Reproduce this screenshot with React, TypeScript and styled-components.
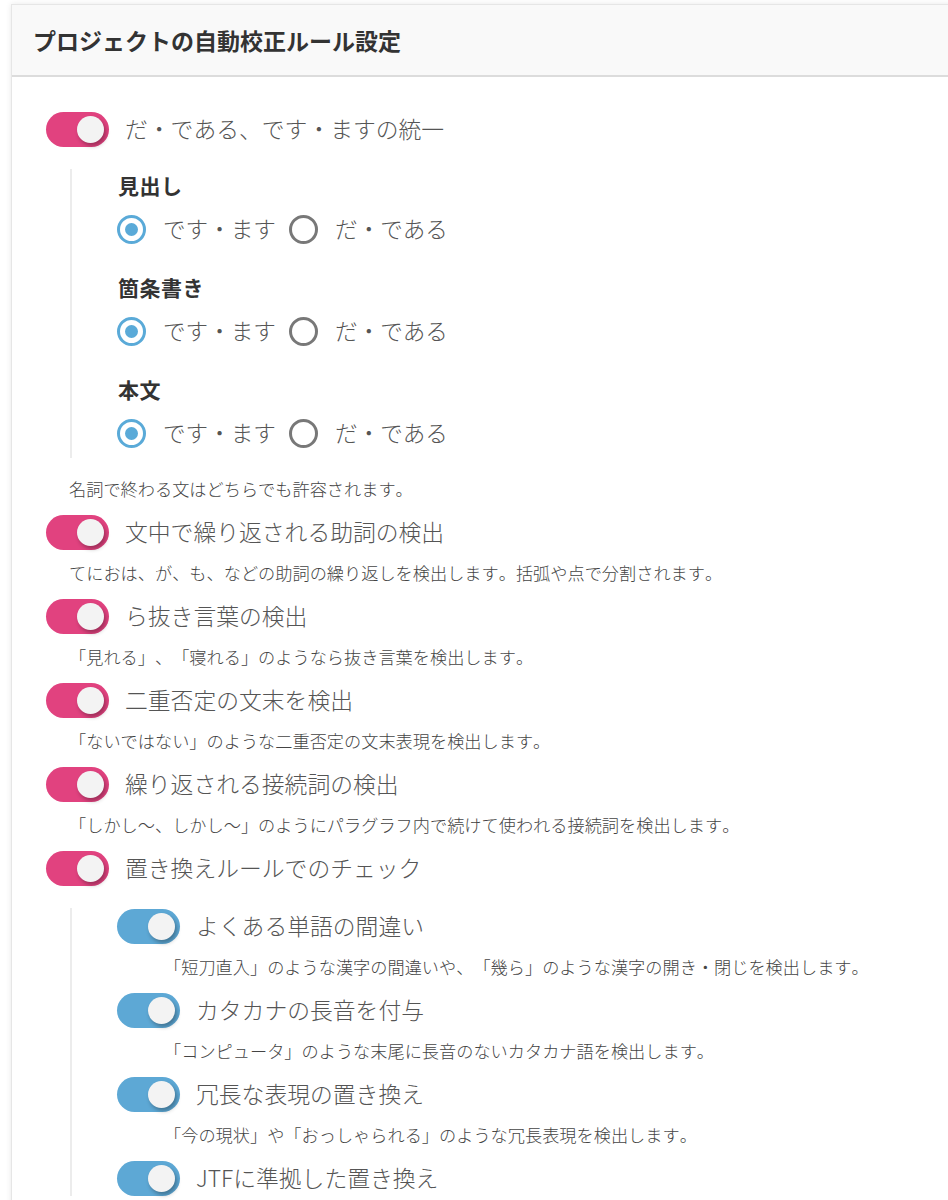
import React from 'react';
import styled, { createGlobalStyle } from 'styled-components';

const GlobalStyle = createGlobalStyle`
  body {
    margin: 0;
    background: #ffffff;
    overflow-x: hidden;
    font-family: "Noto Sans CJK JP", "Noto Sans", sans-serif;
    font-kerning: none;
    text-spacing-trim: space-all;
  }
`;

type Tone = 'pink' | 'blue';

const toneColor: Record<Tone, string> = {
  pink: '#e1427f',
  blue: '#5da8d5',
};

type RuleData = {
  label: string;
  desc?: string;
};

const mainRules: RuleData[] = [
  {
    label: '文中で繰り返される助詞の検出',
    desc: 'てにおは、が、も、などの助詞の繰り返しを検出します。括弧や点で分割されます。',
  },
  {
    label: 'ら抜き言葉の検出',
    desc: '「見れる」、「寝れる」のようなら抜き言葉を検出します。',
  },
  {
    label: '二重否定の文末を検出',
    desc: '「ないではない」のような二重否定の文末表現を検出します。',
  },
  {
    label: '繰り返される接続詞の検出',
    desc: '「しかし〜、しかし〜」のようにパラグラフ内で続けて使われる接続詞を検出します。',
  },
];

const replaceRules: RuleData[] = [
  {
    label: 'よくある単語の間違い',
    desc: '「短刀直入」のような漢字の間違いや、「幾ら」のような漢字の開き・閉じを検出します。',
  },
  {
    label: 'カタカナの長音を付与',
    desc: '「コンピュータ」のような末尾に長音のないカタカナ語を検出します。',
  },
  {
    label: '冗長な表現の置き換え',
    desc: '「今の現状」や「おっしゃられる」のような冗長表現を検出します。',
  },
  {
    label: 'JTFに準拠した置き換え',
  },
];

const styleGroups = ['見出し', '箇条書き', '本文'];

function Switch({ tone }: { tone: Tone }) {
  return (
    <SwitchTrack $tone={tone}>
      <SwitchKnob />
    </SwitchTrack>
  );
}

function Radio({ checked, label }: { checked: boolean; label: string }) {
  return (
    <RadioOption>
      <RadioCircle $checked={checked} />
      <RadioLabel>{label}</RadioLabel>
    </RadioOption>
  );
}

type RuleProps = RuleData & {
  tone: Tone;
  descIndent: number;
  children?: React.ReactNode;
};

function Rule({ label, desc, tone, descIndent, children }: RuleProps) {
  return (
    <RuleBlock>
      <RuleHead>
        <Switch tone={tone} />
        <RuleLabel>{label}</RuleLabel>
      </RuleHead>
      {desc && <RuleDesc $indent={descIndent}>{desc}</RuleDesc>}
      {children}
    </RuleBlock>
  );
}

export default function App() {
  return (
    <>
      <GlobalStyle />
      <Card>
        <CardHeader>
          <CardTitle>プロジェクトの自動校正ルール設定</CardTitle>
        </CardHeader>
        <CardBody>
          <Rule label="だ・である、です・ますの統一" tone="pink" descIndent={23}>
            <Nested $pad={46} $bottom={9}>
              {styleGroups.map((g) => (
                <StyleGroup key={g}>
                  <GroupTitle>{g}</GroupTitle>
                  <RadioRow>
                    <Radio checked label="です・ます" />
                    <Radio checked={false} label="だ・である" />
                  </RadioRow>
                </StyleGroup>
              ))}
            </Nested>
            <Note>名詞で終わる文はどちらでも許容されます。</Note>
          </Rule>

          {mainRules.map((r) => (
            <Rule key={r.label} {...r} tone="pink" descIndent={23} />
          ))}

          <Rule label="置き換えルールでのチェック" tone="pink" descIndent={23}>
            <Nested $pad={45} $bottom={0}>
              {replaceRules.map((r) => (
                <Rule key={r.label} {...r} tone="blue" descIndent={47} />
              ))}
            </Nested>
          </Rule>
        </CardBody>
      </Card>
    </>
  );
}

// 外枠のカード。右側は画面の外まで続いている
const Card = styled.div`
  margin: 4px -40px 0 11px;
  border: 1px solid #e6e6e6;
  box-shadow: 0 0 6px rgba(0, 0, 0, 0.09);
  background: #ffffff;
  min-height: 1300px;
`;

const CardHeader = styled.div`
  height: 70px;
  display: flex;
  align-items: center;
  padding: 0 21px;
  background: #f9f9f9;
  border-bottom: 2px solid #dcdcdc;
`;

const CardTitle = styled.h2`
  margin: 0;
  font-size: 23px;
  font-weight: 700;
  line-height: 30px;
  color: #333333;
`;

const CardBody = styled.div`
  padding: 34px 0 0 34px;
`;

const RuleBlock = styled.div`
  margin-bottom: 13px;
`;

const RuleHead = styled.div`
  display: flex;
  align-items: center;
  gap: 16px;
  height: 36px;
`;

const RuleLabel = styled.span`
  font-size: 22.8px;
  font-weight: 300;
  line-height: 30px;
  color: #555555;
`;

const RuleDesc = styled.div<{ $indent: number }>`
  margin-top: 11px;
  padding-left: ${(p) => p.$indent}px;
  font-size: 17.2px;
  font-weight: 300;
  line-height: 24px;
  color: #444444;
  white-space: nowrap;
`;

const Note = styled.div`
  margin-top: 19px;
  padding-left: 23px;
  font-size: 17.2px;
  font-weight: 300;
  line-height: 24px;
  color: #444444;
`;

// 入れ子になったルールの左の縦線
const Nested = styled.div<{ $pad: number; $bottom: number }>`
  margin: 22px 0 0 24px;
  padding: 0 0 ${(p) => p.$bottom}px ${(p) => p.$pad}px;
  border-left: 2px solid #ececec;
`;

const SwitchTrack = styled.div<{ $tone: Tone }>`
  position: relative;
  flex: none;
  width: 63px;
  height: 35px;
  border-radius: 18px;
  background: ${(p) => toneColor[p.$tone]};
`;

const SwitchKnob = styled.div`
  position: absolute;
  top: 4px;
  right: 5px;
  width: 27px;
  height: 27px;
  border-radius: 50%;
  background: #f3f3f3;
  box-shadow: 2px 3px 4px rgba(0, 0, 0, 0.3);
`;

const StyleGroup = styled.div`
  padding-top: 1px;
  & + & {
    padding-top: 27px;
  }
`;

const GroupTitle = styled.div`
  font-size: 21px;
  font-weight: 700;
  line-height: 30px;
  color: #333333;
  letter-spacing: 0.5px;
`;

const RadioRow = styled.div`
  display: flex;
  align-items: center;
  height: 32px;
  margin-top: 13px;
  margin-left: -1px;
`;

const RadioOption = styled.label`
  display: flex;
  align-items: center;
  gap: 17px;
  margin-right: 13px;
`;

const RadioCircle = styled.span<{ $checked: boolean }>`
  position: relative;
  box-sizing: border-box;
  width: 29px;
  height: 29px;
  border-radius: 50%;
  border: 3px solid ${(p) => (p.$checked ? '#5aaad8' : '#787878')};
  background: #ffffff;
  &::after {
    content: '';
    display: ${(p) => (p.$checked ? 'block' : 'none')};
    position: absolute;
    top: 5px;
    left: 5px;
    width: 13px;
    height: 13px;
    border-radius: 50%;
    background: #5aaad8;
  }
`;

const RadioLabel = styled.span`
  font-size: 22.6px;
  font-weight: 300;
  line-height: 30px;
  color: #555555;
`;
